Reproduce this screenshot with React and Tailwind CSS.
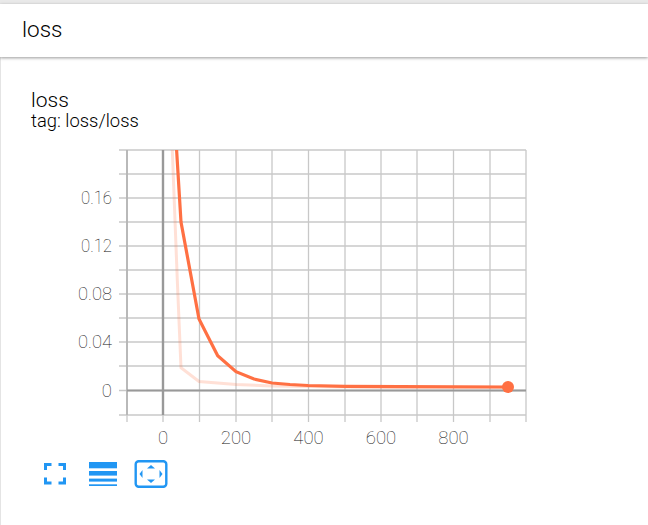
const xs = [127, 163, 199.5, 236, 272, 308.5, 345, 381, 417, 453.5, 490, 526];
const ys = [150, 174, 198, 222, 246, 270, 294, 318, 342, 366, 390.5, 415];
const xLabels = [[163, "0"], [236, "200"], [308.5, "400"], [381, "600"], [453.5, "800"]];
const yLabels = [[198, "0.16", 31], [246, "0.12", 31], [294, "0.08", 34], [342, "0.04", 34], [390.5, "0"]];
const smooth = "176.6,150 181,222 199,319 217.7,355.7 236,371.7 254,379 272,383 290,384.5 308,385.5 345,386.3 400,386.7 508,387";
const raw = "172.3,150 177.3,280 181,367.7 199,381.5 236,384.5 272,386 345,387 508,387.4";

function Chart() {
  return (
    <svg width="540" height="300" viewBox="70 148 540 300" className="block">
      {ys.map((y) => (
        <line key={y} x1="119" x2="526" y1={y} y2={y} stroke="#c8c8c8" strokeWidth="1.3" />
      ))}
      {xs.map((x) => (
        <line key={x} x1={x} x2={x} y1="150" y2="422" stroke="#c8c8c8" strokeWidth="1.3" />
      ))}
      <line x1="127" x2="127" y1="150" y2="415" stroke="#b5b5b5" strokeWidth="1.8" />
      <line x1="163" x2="163" y1="150" y2="415" stroke="#999999" strokeWidth="2.4" />
      <line x1="127" x2="526" y1="390.5" y2="390.5" stroke="#999999" strokeWidth="2.2" />
      <polyline points={raw} fill="none" stroke="#ff7043" strokeOpacity="0.22" strokeWidth="3" />
      <polyline points={smooth} fill="none" stroke="#ff7043" strokeWidth="3.2" />
      <circle cx="508" cy="387" r="6" fill="#ff7043" />
      <g fontFamily="Roboto, sans-serif" fontWeight="100" fontSize="18.5" fill="#111111">
        {yLabels.map(([y, t, w]) => (
          <text key={t} x="112" y={y + 6} textAnchor="end" textLength={w} lengthAdjust={w ? "spacingAndGlyphs" : undefined}>{t}</text>
        ))}
        {xLabels.map(([x, t]) => (
          <text key={t} x={x} y="444" textAnchor="middle">{t}</text>
        ))}
      </g>
    </svg>
  );
}

function Tools() {
  return (
    <svg width="140" height="32" viewBox="40 458 140 32" className="block">
      <g fill="none" stroke="#2196f3" strokeWidth="3">
        <path d="M45.5 470V464.5H51.5M58.5 464.5H64.5V470M64.5 477.5V483H58.5M51.5 483H45.5V477.5" />
      </g>
      <g fill="#2196f3">
        <rect x="89" y="462" width="28" height="6.3" />
        <rect x="89" y="471" width="28" height="4.6" />
        <rect x="89" y="478.6" width="28" height="3" />
        <rect x="89" y="484.3" width="28" height="1.7" />
      </g>
      <rect x="135.7" y="461.2" width="30.6" height="25.6" rx="3" fill="none" stroke="#2196f3" strokeWidth="2.4" />
      <g fill="#2196f3">
        <path d="M151 465L155 468.5H147Z" />
        <path d="M151 483L155 479.5H147Z" />
        <path d="M139.5 474L142.5 470V478Z" />
        <path d="M162.5 474L159.5 470V478Z" />
      </g>
    </svg>
  );
}

export default function App() {
  return (
    <div className="w-[648px] h-[525px] overflow-hidden bg-white font-['Roboto',sans-serif] font-light text-black">
      <div className="h-[4px] bg-[#e9e9e9]" />
      <div className="relative z-10 h-[52.5px] bg-white pl-[22px] pt-[10px] text-[22.5px] leading-[30px] font-light shadow-[0_1px_3px_rgba(0,0,0,0.4)]">
        loss
      </div>
      <div className="h-[468px] border-l border-[#e4e4e4] pl-[30px] pt-[32px]">
        <div className="text-[21px] leading-[22px]">loss</div>
        <div className="text-[18.4px] leading-[20px] font-light">tag: loss/loss</div>
        <div className="ml-[39px] mt-[17px]">
          <Chart />
        </div>
        <div className="ml-[9px] mt-[10px]">
          <Tools />
        </div>
      </div>
    </div>
  );
}
